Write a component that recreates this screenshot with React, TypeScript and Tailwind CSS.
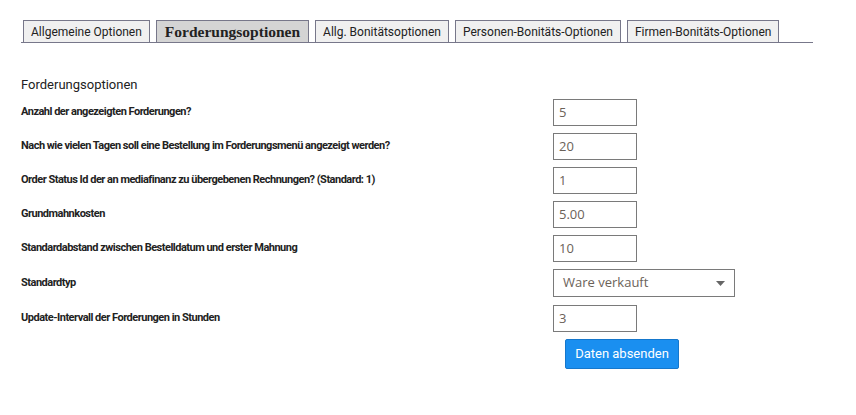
const tabs = [
  'Allgemeine Optionen',
  'Forderungsoptionen',
  'Allg. Bonitätsoptionen',
  'Personen-Bonitäts-Optionen',
  'Firmen-Bonitäts-Optionen',
];

const fields: { label: string; value: string; select?: boolean }[] = [
  { label: 'Anzahl der angezeigten Forderungen?', value: '5' },
  { label: 'Nach wie vielen Tagen soll eine Bestellung im Forderungsmenü angezeigt werden?', value: '20' },
  { label: 'Order Status Id der an mediafinanz zu übergebenen Rechnungen? (Standard: 1)', value: '1' },
  { label: 'Grundmahnkosten', value: '5.00' },
  { label: 'Standardabstand zwischen Bestelldatum und erster Mahnung', value: '10' },
  { label: 'Standardtyp', value: 'Ware verkauft', select: true },
  { label: 'Update-Intervall der Forderungen in Stunden', value: '3' },
];

export default function App() {
  return (
    <div className="w-[856px] h-[415px] bg-white pl-[21px] pr-[43px] pt-[20px] font-['Roboto',sans-serif] text-[#222]">
      {/* Tabs */}
      <div className="flex gap-[6px] pl-[2px] border-b border-[#77778a]">
        {tabs.map((t, i) =>
          i === 1 ? (
            <div
              key={t}
              className="shrink-0 whitespace-nowrap h-[22px] px-[8px] flex items-center border border-b-0 border-[#77778a] bg-[#d4d4d4] font-['Liberation_Serif',serif] font-bold text-[15.5px]"
            >
              {t}
            </div>
          ) : (
            <div
              key={t}
              className="shrink-0 whitespace-nowrap h-[22px] px-[7px] flex items-center border border-b-0 border-[#77778a] bg-[#f0f0f0] text-[12px]"
            >
              {t}
            </div>
          )
        )}
      </div>

      <div className="mt-[34px] text-[13px] leading-[16px]">Forderungsoptionen</div>

      <div className="mt-[6px] flex flex-col gap-[7px]">
        {fields.map(f => (
          <div key={f.label} className={`flex items-center ${f.value === '3' ? 'mt-[1px]' : ''}`}>
            <div className="w-[532px] whitespace-nowrap text-[11px] font-bold tracking-[-0.5px]">{f.label}</div>
            {f.select ? (
              <div className="w-[182px] h-[28px] border border-[#7a7a7a] flex items-center justify-between pl-[9px] pr-[9px] font-['Open_Sans',sans-serif] text-[13px] text-[#6b6259]">
                <span>{f.value}</span>
                <svg width="9" height="5" viewBox="0 0 9 5">
                  <path d="M0 0h9L4.5 5z" fill="#666" />
                </svg>
              </div>
            ) : (
              <div className="w-[84px] h-[27px] border border-[#7a7a7a] flex items-center pl-[5px] font-['Open_Sans',sans-serif] text-[13px] text-[#6b6259]">
                {f.value}
              </div>
            )}
          </div>
        ))}
      </div>

      <div className="mt-[7px] pl-[544px]">
        <button className="w-[114px] h-[30px] bg-[#1a8ff0] border border-[#1577cc] rounded-[2px] text-white text-[13px]">
          Daten absenden
        </button>
      </div>
    </div>
  );
}
